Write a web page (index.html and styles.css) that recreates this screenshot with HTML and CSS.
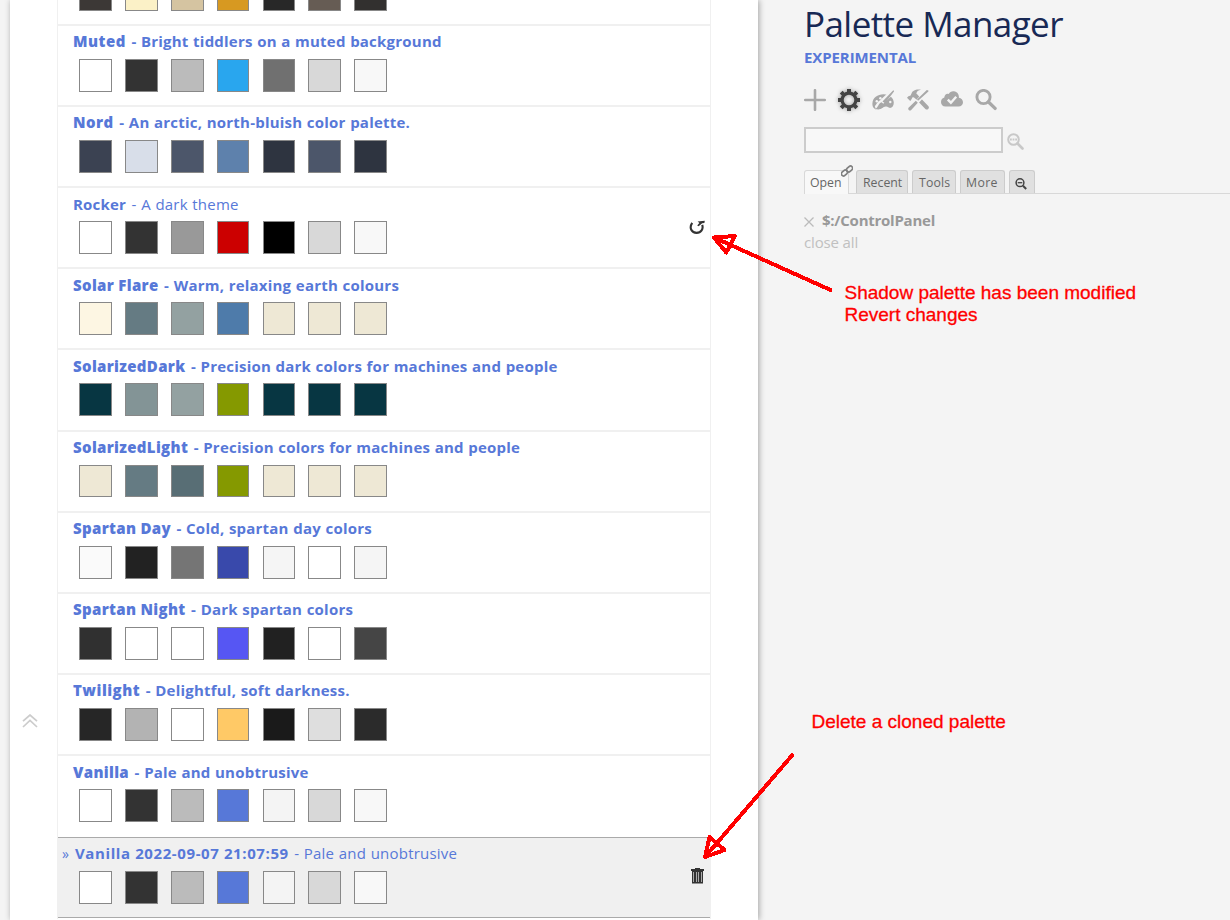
FILE: index.html
```html
<!DOCTYPE html>
<html lang="en">
<head>
<meta charset="utf-8">
<title>Palette Manager</title>
<link rel="stylesheet" href="styles.css">
</head>
<body>
<div class="page">
  <main class="paper">
    <div class="gutter">
      <svg class="to-top" viewBox="0 0 16 14"><path d="M1 7.200 8 1l7 6.200M1 13 8 6.500l7 6.500"/></svg>
    </div>
    <div class="list">
      <div class="row">
        <div class="name"></div>
        <div class="swatches"><i style="background:#3c3836"></i><i style="background:#fbf1c7"></i><i style="background:#d5c4a1"></i><i style="background:#d79921"></i><i style="background:#282828"></i><i style="background:#665c54"></i><i style="background:#32302f"></i></div>
      </div>
      <div class="row">
        <div class="name"><b class="wide">Muted</b> - Bright tiddlers on a muted background</div>
        <div class="swatches"><i style="background:#fff"></i><i style="background:#333"></i><i style="background:#bbb"></i><i style="background:#29a6ee"></i><i style="background:#707070"></i><i style="background:#d8d8d8"></i><i style="background:#f8f8f8"></i></div>
      </div>
      <div class="row">
        <div class="name"><b class="wide">Nord</b> - An arctic, north-bluish color palette.</div>
        <div class="swatches"><i style="background:#3b4252"></i><i style="background:#d8dee9"></i><i style="background:#4c566a"></i><i style="background:#5e81ac"></i><i style="background:#2e3440"></i><i style="background:#4c566a"></i><i style="background:#2e3440"></i></div>
      </div>
      <div class="row plain">
        <div class="name"><b>Rocker</b> - A dark theme</div>
        <div class="swatches"><i style="background:#fff"></i><i style="background:#333"></i><i style="background:#999"></i><i style="background:#c00"></i><i style="background:#000"></i><i style="background:#d8d8d8"></i><i style="background:#f8f8f8"></i></div>
        <svg class="action" viewBox="0 0 16 16"><path d="M3.200 3.900C-.2 9 2.600 13.900 7.600 13.900c4.500 0 7-4 5.600-8" fill="none" stroke="#333" stroke-width="2.100"/><path d="M8.600 2.400 15.800 1.800 15.400 3.900 13.200 4.200 9.600 7.200 8.200 6.600 10.400 3.900Z" fill="#333"/></svg>
      </div>
      <div class="row">
        <div class="name"><b>Solar Flare</b> - Warm, relaxing earth colours</div>
        <div class="swatches"><i style="background:#fdf6e3"></i><i style="background:#657b83"></i><i style="background:#93a1a1"></i><i style="background:#4e7baa"></i><i style="background:#eee8d5"></i><i style="background:#eee8d5"></i><i style="background:#eee8d5"></i></div>
      </div>
      <div class="row">
        <div class="name"><b>SolarizedDark</b> - Precision dark colors for machines and people</div>
        <div class="swatches"><i style="background:#073642"></i><i style="background:#839496"></i><i style="background:#93a1a1"></i><i style="background:#859900"></i><i style="background:#073642"></i><i style="background:#073642"></i><i style="background:#073642"></i></div>
      </div>
      <div class="row">
        <div class="name"><b>SolarizedLight</b> - Precision colors for machines and people</div>
        <div class="swatches"><i style="background:#eee8d5"></i><i style="background:#657b83"></i><i style="background:#586e75"></i><i style="background:#859900"></i><i style="background:#eee8d5"></i><i style="background:#eee8d5"></i><i style="background:#eee8d5"></i></div>
      </div>
      <div class="row">
        <div class="name"><b>Spartan Day</b> - Cold, spartan day colors</div>
        <div class="swatches"><i style="background:#fafafa"></i><i style="background:#222"></i><i style="background:#757575"></i><i style="background:#3949ab"></i><i style="background:#f5f5f5"></i><i style="background:#fff"></i><i style="background:#f5f5f5"></i></div>
      </div>
      <div class="row">
        <div class="name"><b>Spartan Night</b> - Dark spartan colors</div>
        <div class="swatches"><i style="background:#303030"></i><i style="background:#fff"></i><i style="background:#fff"></i><i style="background:#5656f3"></i><i style="background:#212121"></i><i style="background:#fff"></i><i style="background:#454545"></i></div>
      </div>
      <div class="row">
        <div class="name"><b class="wide">Twilight</b> - Delightful, soft darkness.</div>
        <div class="swatches"><i style="background:#262626"></i><i style="background:#b3b3b3"></i><i style="background:#fff"></i><i style="background:#ffc966"></i><i style="background:#1a1a1a"></i><i style="background:#dedede"></i><i style="background:#2b2b2b"></i></div>
      </div>
      <div class="row">
        <div class="name"><b>Vanilla</b> - Pale and unobtrusive</div>
        <div class="swatches"><i style="background:#fff"></i><i style="background:#333"></i><i style="background:#bbb"></i><i style="background:#5778d8"></i><i style="background:#f4f4f4"></i><i style="background:#d8d8d8"></i><i style="background:#f8f8f8"></i></div>
      </div>
      <div class="row plain active">
        <div class="name"><span class="mark">»</span><b>Vanilla 2022-09-07 21:07:59</b> - Pale and unobtrusive</div>
        <div class="swatches"><i style="background:#fff"></i><i style="background:#333"></i><i style="background:#bbb"></i><i style="background:#5778d8"></i><i style="background:#f4f4f4"></i><i style="background:#d8d8d8"></i><i style="background:#f8f8f8"></i></div>
        <svg class="action bin" viewBox="0 0 16 16"><path d="M5 0h5v1h4v2H1V1h4ZM2 3h11v12.500H2Z" fill="#333"/><path d="M3.500 4v10M6.500 4v10M8.500 4v10M11.500 4v10" stroke="#aaa" stroke-width="1" fill="none"/></svg>
      </div>
    </div>
  </main>

  <aside class="sidebar">
    <h1>Palette Manager</h1>
    <div class="subtitle">EXPERIMENTAL</div>
    <div class="tools">
      <svg viewBox="0 0 22 22"><path d="M11 1.200v19.600M1.200 11h19.600" stroke="#a8a8a8" stroke-width="2.600" stroke-linecap="round"/></svg>
      <svg class="gear" viewBox="0 0 22 22"><g fill="none" stroke="#444"><circle cx="11" cy="11" r="6.900" stroke-width="3.200"/><path d="M11 0v4M11 18v4M0 11h4M18 11h4M3.200 3.200l2.900 2.900M15.900 15.900l2.900 2.900M3.200 18.800l2.900-2.900M15.900 6.100l2.900-2.900" stroke-width="4"/></g></svg>
      <svg viewBox="0 0 22 22"><path d="M.4 14.500C.6 8.800 5.500 5.300 11.500 5.300c6 .1 10.200 3.700 10.300 8.300 0 3.400-1.600 5.200-3.800 5.300-2 0-1.900-1.500-4.200-1.300-3 .3-3.600 2.900-8.300 2.900C2 20.500.3 18 .4 14.500Z" fill="#a8a8a8"/><path d="M3.500 19.200c3.300-1 3-5.200 6.200-6.300L21 2.500" stroke="#f4f4f4" stroke-width="4.800" fill="none"/><g fill="#f4f4f4"><circle cx="4.800" cy="12.300" r="1.200"/><circle cx="8.400" cy="9.200" r="1.200"/><circle cx="18.300" cy="13" r="1.200"/></g><path d="M22 2.400 13 14.200 10.500 12.400 20.500 2c1-.8 1.900-.4 1.500.4ZM9.600 13.200l2.600 2.200c-.5 3.300-4.600 5.400-9.200 4.600 3-1 3.300-5.800 6.600-6.800Z" fill="#a8a8a8"/></svg>
      <svg viewBox="0 0 22 22"><path d="m8.800 7 11 11.500" stroke="#a8a8a8" stroke-width="4" stroke-linecap="round"/><path d="M5.300 2.700C8 .4 11.300.2 14 .8c-2.800.4-4.500 1.700-4.600 4L11 6.500 8 9.500 7.300 8.200 5.200 8.400c-.2 1.300-1 2.300-2 3.500L0 8.700l1.400-1.400 2.200-.7Z" fill="#a8a8a8"/><path d="M20.500 1.500 3.500 20" stroke="#f4f4f4" stroke-width="4"/><path d="M21.400 1.500 19.800.9 10 10.600l1.100 1.100L21.400 2.500ZM8.800 11.700l2 2-6.800 7.500c-1.500 1.100-3.500-.7-2.500-2.400Z" fill="#a8a8a8"/></svg>
      <svg viewBox="0 0 22 22"><path d="M4.500 17.500C1.700 17.500 0 15.500 0 13c0-2.300 1.300-3.900 3.300-4.500C3.600 5.500 5.700 4.200 7.800 5c1-2.100 3-3 5.100-2.700 3.200.4 5.300 3 5 6.400 2.400.5 4.100 2.300 4.100 4.500 0 2.400-1.800 4.300-4.500 4.300Z" fill="#a8a8a8"/><path d="m6.800 10.600 3.100 3.100 5.300-5.900" fill="none" stroke="#f4f4f4" stroke-width="2.400"/></svg>
      <svg viewBox="0 0 22 22"><circle cx="8.500" cy="8" r="6.600" fill="none" stroke="#a8a8a8" stroke-width="2.900"/><path d="m13.500 13 6.600 6.400" stroke="#a8a8a8" stroke-width="3.300" stroke-linecap="round"/></svg>
    </div>
    <div class="search">
      <input type="text" aria-label="Search">
      <svg viewBox="0 0 17 17"><circle cx="6.500" cy="6.500" r="5.300" fill="none" stroke="#c8c8c8" stroke-width="2"/><path d="m10.500 10.500 5 5" stroke="#c8c8c8" stroke-width="2.600" stroke-linecap="round"/><path d="M3 6.500h7" stroke="#c8c8c8" stroke-width="2" stroke-dasharray="1.800 .8"/></svg>
    </div>
    <div class="tabs">
      <span class="tab open">Open<svg class="link" viewBox="0 0 12 12"><g fill="none" stroke="#808080" stroke-width="1.700"><rect x=".1" y="5.900" width="6.600" height="4.200" rx="2.100" transform="rotate(-42 3.400 8)"/><rect x="5.300" y="1.900" width="6.600" height="4.200" rx="2.100" transform="rotate(-42 8.600 4)"/></g></svg></span>
      <span class="tab recent">Recent</span>
      <span class="tab tools-tab">Tools</span>
      <span class="tab more">More</span>
      <span class="tab find"><svg viewBox="0 0 12 12"><circle cx="5" cy="4.700" r="3.900" fill="none" stroke="#444" stroke-width="1.500"/><path d="m8 7.800 3.200 3.200" stroke="#444" stroke-width="2"/><path d="M2.700 4.700h4.600" stroke="#444" stroke-width="1.300"/></svg></span>
    </div>
    <div class="open-item"><svg viewBox="0 0 10 10"><path d="m.5.5 9 9m0-9-9 9" stroke="#bbb" stroke-width="1.300"/></svg><b>$:/ControlPanel</b></div>
    <div class="close-all">close all</div>
  </aside>

  <div class="note note-revert">Shadow palette has been modified<br>Revert changes</div>
  <div class="note note-delete">Delete a cloned palette</div>
  <svg class="arrows" viewBox="0 0 1230 920"><g fill="none" stroke="#f00" stroke-width="4" stroke-linecap="round" stroke-linejoin="round" shape-rendering="crispEdges"><path d="M830.500 290 714 237.500M714 237.500l21-1.500-8.800 16.500Z"/><path d="M792 755.500 705 857M705 857l4.500-20 15 13Z"/></g></svg>
</div>
</body>
</html>
```

FILE: styles.css
```css
* { box-sizing: border-box; }
body {
  margin: 0;
  background: #f4f4f4;
  font-family: "Open Sans", "Noto Sans", sans-serif;
}
.page {
  position: relative;
  display: flex;
  width: 1230px;
  height: 920px;
  padding-left: 10px;
  overflow: hidden;
}
.paper {
  display: flex;
  flex: none;
  width: 748px;
  height: 920px;
  background: #fff;
  box-shadow: 1px 0 6px rgba(0, 0, 0, .34);
}
.gutter {
  width: 47px;
  padding: 714px 0 0 12px;
}
.to-top {
  display: block;
  width: 16px;
  height: 14px;
  fill: none;
  stroke: #ccc;
  stroke-width: 1.7;
}
.list {
  width: 654px;
  height: 976px;
  margin-top: -57.3px;
  border: solid #f0f0f0;
  border-width: 0 1px;
}
.row {
  position: relative;
  height: 81.15px;
  padding: 5.4px 0 0 15px;
  border-top: 2px solid #f0f0f0;
}
.name {
  height: 20px;
  font-size: 15px;
  font-weight: 700;
  line-height: 20px;
  letter-spacing: .22px;
  word-spacing: .4px;
  white-space: pre;
  color: #5778d8;
}
.name b {
  margin-right: 1px;
  font-weight: 800;
  letter-spacing: .33px;
  word-spacing: 0;
}
.name b.wide { letter-spacing: .5px; }
.plain .name { font-weight: 400; }
.plain .name b { font-weight: 700; letter-spacing: .2px; }
.swatches {
  display: flex;
  gap: 13.1px;
  padding: 7.7px 0 0 6px;
}
.swatches i {
  width: 32.8px;
  height: 32.8px;
  border: 1px solid #888;
}
.action {
  position: absolute;
  top: 31px;
  right: 5px;
  width: 16px;
  height: 16px;
}
.action.bin { top: 30px; right: 4px; }
.active {
  height: 81.5px;
  padding: 5.4px 0 0 4px;
  margin-top: 1.5px;
  background: #f0f0f0;
  border-top: 1px solid #aaa;
  border-bottom: 1px solid #aaa;
}
.active .name b { letter-spacing: .6px; }
.active .swatches { padding-left: 17px; }
.mark {
  display: inline-block;
  width: 13px;
  font-size: 14px;
}
.sidebar {
  flex: 1;
  padding-left: 46px;
}
h1 {
  height: 46px;
  margin: 0;
  font-size: 35px;
  font-weight: 400;
  line-height: 48px;
  letter-spacing: -.57px;
  white-space: nowrap;
  color: #182955;
}
.subtitle {
  height: 43px;
  font-size: 15px;
  font-weight: 700;
  line-height: 23px;
  letter-spacing: -.1px;
  color: #5778d8;
}
.tools {
  display: flex;
  gap: 12.2px;
}
.tools svg { width: 22px; height: 22px; }
.gear { filter: drop-shadow(0 0 2px rgba(0, 0, 0, .35)); }
.search {
  display: flex;
  gap: 4px;
  padding-top: 16px;
}
.search input {
  width: 199px;
  height: 26px;
  border: 2px solid #ccc;
  background: #f8f8f8;
}
.search svg { width: 17px; height: 17px; margin-top: 6px; }
.tabs {
  display: flex;
  height: 24px;
  margin-top: 17px;
  border-bottom: 1px solid #d8d8d8;
}
.tab {
  height: 23px;
  padding-left: 6px;
  font-size: 12.3px;
  line-height: 23px;
  color: #666;
  background: #e0e0e0;
  border: 1px solid #ccc;
  border-bottom: 0;
  border-radius: 3px 3px 0 0;
}
.open {
  position: relative;
  width: 45px;
  height: 24px;
  margin-right: 7px;
  padding-left: 5px;
  background: #f8f8f8;
  border-color: #d8d8d8;
}
.link {
  position: absolute;
  top: -6px;
  right: -5px;
  width: 12px;
  height: 12px;
}
.recent { width: 52px; margin-right: 4px; }
.tools-tab { width: 44px; margin-right: 4px; letter-spacing: .15px; }
.more { width: 45px; margin-right: 4px; padding-left: 5px; letter-spacing: .35px; }
.find { width: 26px; padding-left: 5px; }
.find svg { display: block; width: 12px; height: 12px; margin-top: 7px; }
.open-item {
  display: flex;
  align-items: center;
  gap: 8px;
  height: 22px;
  margin-top: 15px;
  font-size: 15px;
  letter-spacing: -.25px;
  color: #999;
}
.open-item svg { width: 10px; height: 10px; margin-top: 3px; }
.close-all {
  font-size: 15px;
  line-height: 22px;
  letter-spacing: -.15px;
  color: #c0c0c0;
}
.note {
  position: absolute;
  font: 19px/22px "Liberation Sans", Arial, sans-serif;
  color: #f00;
  -webkit-text-stroke: .3px #f00;
}
.note-revert { top: 282px; left: 844.5px; }
.note-delete { top: 711px; left: 811.5px; }
.arrows {
  position: absolute;
  top: 0;
  left: 0;
  width: 1230px;
  height: 920px;
  pointer-events: none;
}
```
